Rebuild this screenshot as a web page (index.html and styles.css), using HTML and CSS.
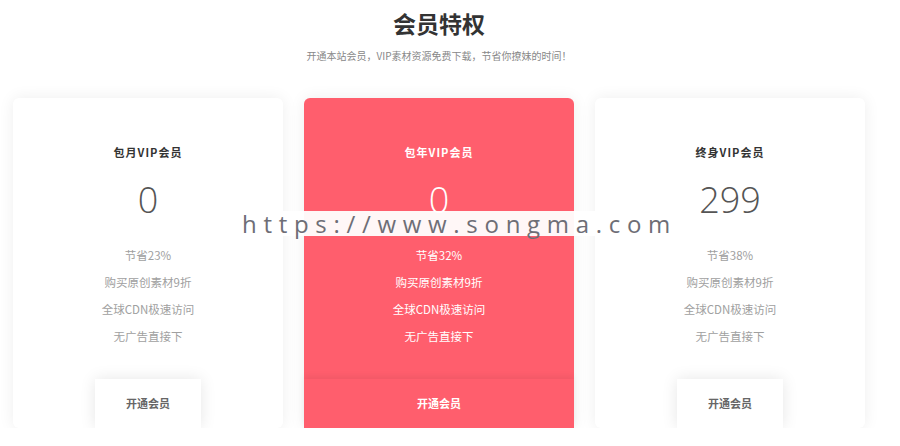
FILE: index.html
```html
<!DOCTYPE html>
<html lang="zh-CN">
<head>
    <meta charset="UTF-8">
    <meta name="viewport" content="width=device-width, initial-scale=1.0">
    <title>会员特权</title>
    <link rel="stylesheet" href="styles.css">
</head>
<body>
    <div class="vip-section">
        <div class="vip-head">
            <h1>会员特权</h1>
            <p>开通本站会员，VIP素材资源免费下载，节省你撩妹的时间！</p>
        </div>

        <div class="vip-list">
            <!-- 包月 -->
            <div class="vip-card">
                <h3>包月VIP会员</h3>
                <div class="price">0</div>
                <ul>
                    <li>节省23%</li>
                    <li>购买原创素材9折</li>
                    <li>全球CDN极速访问</li>
                    <li>无广告直接下</li>
                </ul>
                <a class="vip-btn" href="#">开通会员</a>
            </div>

            <!-- 包年 -->
            <div class="vip-card active">
                <h3>包年VIP会员</h3>
                <div class="price">0</div>
                <ul>
                    <li>节省32%</li>
                    <li>购买原创素材9折</li>
                    <li>全球CDN极速访问</li>
                    <li>无广告直接下</li>
                </ul>
                <a class="vip-btn" href="#">开通会员</a>
            </div>

            <!-- 终身 -->
            <div class="vip-card">
                <h3>终身VIP会员</h3>
                <div class="price">299</div>
                <ul>
                    <li>节省38%</li>
                    <li>购买原创素材9折</li>
                    <li>全球CDN极速访问</li>
                    <li>无广告直接下</li>
                </ul>
                <a class="vip-btn" href="#">开通会员</a>
            </div>
        </div>
    </div>

    <div class="watermark">https://www.songma.com</div>
</body>
</html>
```

FILE: styles.css
```css
body {
    margin: 0;
    background: #fff;
    font-family: "Noto Sans CJK SC", "Noto Sans", sans-serif;
    color: #333;
}
.vip-section {
    width: 852px;
    margin-left: 13px;
}
.vip-head {
    text-align: center;
    padding-top: 8px;
}
.vip-head h1 {
    margin: 0;
    font-size: 23px;
    line-height: 30px;
    font-weight: 700;
    color: #333;
}
.vip-head p {
    margin: 11px 0 0;
    font-size: 10px;
    line-height: 14px;
    color: #888;
}
.vip-list {
    display: flex;
    gap: 21px;
    margin-top: 35px;
}
.vip-card {
    width: 270px;
    height: 330px;
    background: #fff;
    border-radius: 6px;
    box-shadow: 0 0 16px rgba(0, 0, 0, 0.07);
    display: flex;
    flex-direction: column;
    align-items: center;
    padding-top: 46px;
    box-sizing: border-box;
}
.vip-card h3 {
    margin: 0;
    font-size: 11px;
    line-height: 16px;
    font-weight: 700;
    letter-spacing: 1px;
    color: #333;
}
.vip-card .price {
    margin-top: 15px;
    font-family: "Open Sans", sans-serif;
    font-weight: 300;
    font-size: 36px;
    line-height: 50px;
    color: #555;
}
.vip-card ul {
    list-style: none;
    margin: 17px 0 0;
    padding: 0;
    text-align: center;
}
.vip-card li {
    font-size: 11.5px;
    line-height: 27px;
    color: #a0a0a0;
}
.vip-btn {
    margin-top: auto;
    width: 106px;
    height: 49px;
    line-height: 49px;
    text-align: center;
    background: #fff;
    box-shadow: 0 0 16px rgba(0, 0, 0, 0.1);
    font-size: 11px;
    font-weight: 700;
    color: #666;
    text-decoration: none;
}
.vip-card.active {
    background: #ff5e6d;
    border-radius: 6px 6px 0 0;
}
.vip-card.active h3,
.vip-card.active .price,
.vip-card.active li {
    color: #fff;
}
.vip-card.active .vip-btn {
    width: 100%;
    background: #ff5e6d;
    color: #fff;
    box-shadow: 0 -3px 6px rgba(0, 0, 0, 0.06);
}
.watermark {
    position: absolute;
    left: 242px;
    top: 211px;
    height: 25px;
    line-height: 25px;
    padding-right: 2px;
    background: rgba(255, 255, 255, 0.95);
    font-family: "Open Sans", sans-serif;
    font-size: 24px;
    letter-spacing: 6.7px;
    color: #6e6e76;
}
```
